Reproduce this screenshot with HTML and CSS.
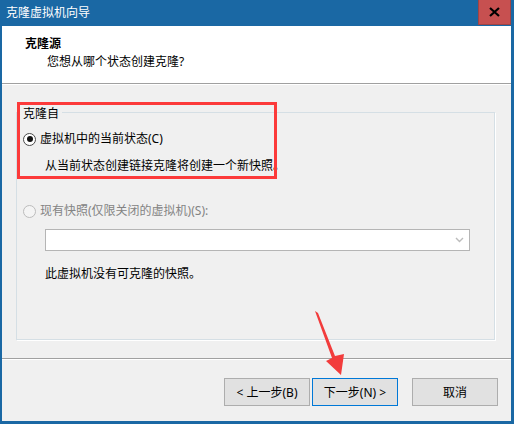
FILE: index.html
```html
<!DOCTYPE html>
<html lang="zh-CN">
  <head>
    <meta charset="UTF-8" />
    <title>克隆虚拟机向导</title>
    <link rel="stylesheet" href="styles.css">
  </head>
  <body>
    <div class="window">
      <div class="titlebar">
        <span class="title">克隆虚拟机向导</span>
        <span class="close">
          <svg width="11" height="10" viewBox="0 0 11 10">
            <path d="M1 1 L10 9 M10 1 L1 9" stroke="#000" stroke-width="2.2" />
          </svg>
        </span>
      </div>

      <div class="header">
        <div class="header-title">克隆源</div>
        <div class="header-sub">您想从哪个状态创建克隆?</div>
      </div>

      <div class="content">
        <fieldset class="group">
          <legend>克隆自</legend>

          <div class="option first">
            <span class="radio checked"></span>
            <span>虚拟机中的当前状态(C)</span>
          </div>
          <div class="note">从当前状态创建链接克隆将创建一个新快照。</div>

          <div class="option second disabled">
            <span class="radio"></span>
            <span>现有快照(仅限关闭的虚拟机)(S):</span>
          </div>
          <div class="combo">
            <svg width="9" height="6" viewBox="0 0 9 6">
              <path d="M1 1 L4.5 4.5 L8 1" stroke="#bcbcbc" stroke-width="1.4" fill="none" />
            </svg>
          </div>
          <div class="empty">此虚拟机没有可克隆的快照。</div>
        </fieldset>

        <div class="separator"></div>

        <div class="buttons">
          <button class="btn">&lt; 上一步(B)</button>
          <button class="btn focused">下一步(N) &gt;</button>
          <button class="btn cancel">取消</button>
        </div>
      </div>
    </div>

    <!-- annotations over the screenshot -->
    <div class="mark"></div>
    <svg class="arrow" width="514" height="424" viewBox="0 0 514 424">
      <polygon points="315,311 318,313 335,356 344,354 341,375 326,361 332,358" fill="#f23c3c" />
    </svg>
  </body>
</html>
```

FILE: styles.css
```css
body {
  margin: 0;
  width: 514px;
  height: 424px;
  position: relative;
  font-family: "Noto Sans", "Noto Sans CJK SC", sans-serif;
  font-size: 12px;
  color: #000;
  overflow: hidden;
}
.window {
  background: #1a68a4;
  padding: 0 3px 3px 2px;
  height: 424px;
  box-sizing: border-box;
}
.titlebar {
  height: 26px;
  display: flex;
  justify-content: space-between;
  align-items: flex-start;
}
.title {
  color: #fff;
  padding-left: 4px;
  line-height: 26px;
  font-size: 12px;
}
.close {
  width: 33px;
  height: 25px;
  box-sizing: border-box;
  background: #c75050;
  border: 1px solid #a04444;
  border-top: none;
  display: flex;
  align-items: center;
  justify-content: center;
}
.header {
  background: #fff;
  height: 58px;
  border-bottom: 1px solid #a0a0a0;
  padding: 10px 0 0 23px;
  box-sizing: border-box;
}
.header-title {
  font-weight: bold;
  line-height: 16px;
}
.header-sub {
  margin-top: 2px;
  padding-left: 22px;
  line-height: 16px;
}
.content {
  background: #f0f0f0;
  border-top: 1px solid #fff;
  height: 337px;
  box-sizing: border-box;
}
.group {
  margin: 17px 0 0 14px;
  width: 479px;
  height: 238px;
  box-sizing: border-box;
  padding: 0;
  border: 1px solid #d5dfe5;
  box-shadow: 1px 1px 0 #fff;
  min-width: 0;
}
.group legend {
  margin-left: 3px;
  padding: 4px 3px 0 3px;
  line-height: 16px;
}
.option {
  display: flex;
  align-items: center;
  gap: 4px;
  padding-left: 6px;
  line-height: 16px;
}
.option.first {
  margin-top: 9px;
}
.option.second {
  margin-top: 29px;
}
.disabled {
  color: #838383;
}
.radio {
  width: 13px;
  height: 13px;
  box-sizing: border-box;
  border-radius: 50%;
  border: 1px solid #4a4a4a;
  background: #fff;
  display: flex;
  align-items: center;
  justify-content: center;
}
.radio.checked::after {
  content: "";
  width: 6px;
  height: 6px;
  border-radius: 50%;
  background: #111;
}
.disabled .radio {
  border-color: #bcbcbc;
  background: #f4f4f4;
}
.note {
  margin-top: 11px;
  padding-left: 28px;
  line-height: 16px;
}
.combo {
  margin: 10px 0 0 28px;
  width: 425px;
  height: 22px;
  box-sizing: border-box;
  border: 1px solid #b5b5b5;
  background: #fff;
  display: flex;
  align-items: center;
  justify-content: flex-end;
  padding-right: 5px;
}
.empty {
  margin-top: 15px;
  padding-left: 28px;
  line-height: 16px;
}
.separator {
  margin-top: 18px;
  border-top: 1px solid #a0a0a0;
  border-bottom: 1px solid #fff;
}
.buttons {
  display: flex;
  justify-content: flex-end;
  gap: 2px;
  padding-right: 13px;
  margin-top: 18px;
}
.btn {
  width: 86px;
  height: 28px;
  background: #e1e1e1;
  border: 1px solid #adadad;
  font-family: "Noto Sans", "Noto Sans CJK SC", sans-serif;
  font-size: 12px;
  color: #000;
  padding: 0;
}
.btn.focused {
  border-color: #0078d7;
}
.btn.cancel {
  margin-left: 12px;
}
.mark {
  position: absolute;
  left: 17px;
  top: 102px;
  width: 260px;
  height: 77px;
  box-sizing: border-box;
  border: 3px solid #fc3a3a;
}
.arrow {
  position: absolute;
  left: 0;
  top: 0;
}
```
